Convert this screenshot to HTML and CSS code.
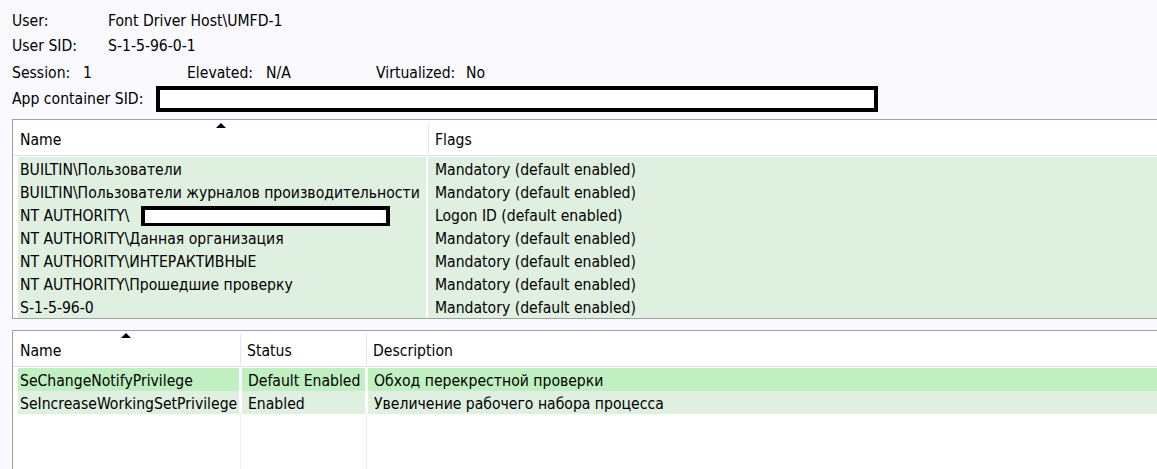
FILE: index.html
```html
<!DOCTYPE html>
<html>
<head>
<meta charset="utf-8">
<link rel="stylesheet" href="styles.css">
</head>
<body>
<div class="page">
  <div class="info">
    <div class="irow r1"><span class="lbl">User:</span><span>Font Driver Host\UMFD-1</span></div>
    <div class="irow r2"><span class="lbl">User SID:</span><span>S-1-5-96-0-1</span></div>
    <div class="irow r3">
      <span class="s-lbl">Session:</span><span class="s-val">1</span>
      <span class="e-lbl">Elevated:</span><span class="e-val">N/A</span>
      <span class="v-lbl">Virtualized:</span><span>No</span>
    </div>
    <div class="irow r4"><span class="ac-lbl">App container SID:</span><span class="redact ac-box"></span></div>
  </div>

  <div class="list list1">
    <div class="head head1">
      <div class="hcell"><span class="sort"></span>Name</div>
      <div class="hcell last">Flags</div>
    </div>
    <div class="body">
      <div class="row row1"><div class="c">BUILTIN\Пользователи</div><div class="c c2">Mandatory (default enabled)</div></div>
      <div class="row row1"><div class="c">BUILTIN\Пользователи журналов производительности</div><div class="c c2">Mandatory (default enabled)</div></div>
      <div class="row row1"><div class="c">NT AUTHORITY\<span class="redact name-box"></span></div><div class="c c2">Logon ID (default enabled)</div></div>
      <div class="row row1"><div class="c">NT AUTHORITY\Данная организация</div><div class="c c2">Mandatory (default enabled)</div></div>
      <div class="row row1"><div class="c">NT AUTHORITY\ИНТЕРАКТИВНЫЕ</div><div class="c c2">Mandatory (default enabled)</div></div>
      <div class="row row1"><div class="c">NT AUTHORITY\Прошедшие проверку</div><div class="c c2">Mandatory (default enabled)</div></div>
      <div class="row row1"><div class="c">S-1-5-96-0</div><div class="c c2">Mandatory (default enabled)</div></div>
    </div>
  </div>

  <div class="list list2">
    <div class="head head2">
      <div class="hcell"><span class="sort sort2"></span>Name</div>
      <div class="hcell hs">Status</div>
      <div class="hcell hs last">Description</div>
    </div>
    <div class="body body2">
      <div class="row row2 bright"><div class="c">SeChangeNotifyPrivilege</div><div class="c c2">Default Enabled</div><div class="c c2">Обход перекрестной проверки</div></div>
      <div class="row row2"><div class="c">SeIncreaseWorkingSetPrivilege</div><div class="c c2">Enabled</div><div class="c c2">Увеличение рабочего набора процесса</div></div>
      <div class="filler"><div></div><div class="vline"></div><div></div><div class="vline"></div><div></div></div>
    </div>
  </div>
</div>
</body>
</html>
```
FILE: styles.css
```css
html, body {
  margin: 0;
  padding: 0;
  height: 100%;
  overflow: hidden;
  background: #f9f9fe;
}
body {
  font-family: "DejaVu Sans Condensed", "DejaVu Sans", sans-serif;
  font-stretch: condensed;
  font-size: 15.6px;
  color: #000;
}
.page {
  display: flex;
  flex-direction: column;
  height: calc(100% + 4px);
  padding: 9px 0 0 12px;
  box-sizing: border-box;
}
.info {
  display: flex;
  flex-direction: column;
}
.irow {
  display: flex;
  align-items: center;
  height: 24px;
  white-space: nowrap;
}
.r2 { margin-top: 1px; }
.r3 { margin-top: 3px; }
.r4 { margin-top: 1px; height: 26px; }
.lbl { width: 96px; }
.s-lbl { width: 71px; }
.s-val { width: 104px; }
.e-lbl { width: 79px; }
.e-val { width: 110px; }
.v-lbl { width: 90px; }
.ac-lbl { width: 144px; }
.redact {
  display: inline-block;
  box-sizing: border-box;
  border: 4px solid #000;
  background: #fff;
}
.ac-box {
  width: 722px;
  height: 26px;
}
.name-box {
  width: 249px;
  height: 21px;
  vertical-align: top;
  margin-left: 12px;
  margin-top: 3px;
}
.list {
  background: #fff;
  border-top: 1px solid #a0a0a6;
  border-left: 1px solid #a0a0a6;
}
.list1 { margin-top: 7px; border-bottom: 1px solid #a0a0a6; }
.list2 { margin-top: 11px; flex: 1; display: flex; flex-direction: column; }
.head {
  display: grid;
  height: 35px;
  border-bottom: 1px solid #e3e3e6;
  box-sizing: content-box;
}
.head1 { grid-template-columns: 416px 1fr; }
.head2 { grid-template-columns: 228px 126px 1fr; }
.hcell {
  position: relative;
  display: flex;
  align-items: center;
  padding: 2px 0 0 7px;
  border-right: 1px solid #e5e5e8;
  margin: 3px 0 1px;
  white-space: nowrap;
}
.hs { padding-left: 6px; }
.hcell.last { border-right: none; padding-left: 6px; }
.sort {
  position: absolute;
  top: 0;
  left: 50%;
  margin-left: -5px;
  width: 0;
  height: 0;
  border-left: 5px solid transparent;
  border-right: 5px solid transparent;
  border-bottom: 5px solid #000;
}
.sort2 { top: -1px; margin-left: -6px; }
.body {
  padding: 1px 0 0 5px;
}
.body2 { flex: 1; display: flex; flex-direction: column; }
.row {
  display: grid;
  column-gap: 2px;
  height: 23px;
  white-space: nowrap;
}
.row1 { grid-template-columns: 408px 1fr; }
.row2 { grid-template-columns: 221px 123px 1fr; column-gap: 3px; }
.c {
  background: #dfefe0;
  padding-left: 2px;
  height: 23px;
  line-height: 26px;
  overflow: hidden;
}
.row1 .c2 { padding-left: 7px; }
.row2 .c2 { padding-left: 6px; }
.bright .c { background: #c0f0c2; }
.filler {
  flex: 1;
  display: grid;
  grid-template-columns: 222px 1px 125px 1px 1fr;
}
.vline { background: #efeff2; }
```
